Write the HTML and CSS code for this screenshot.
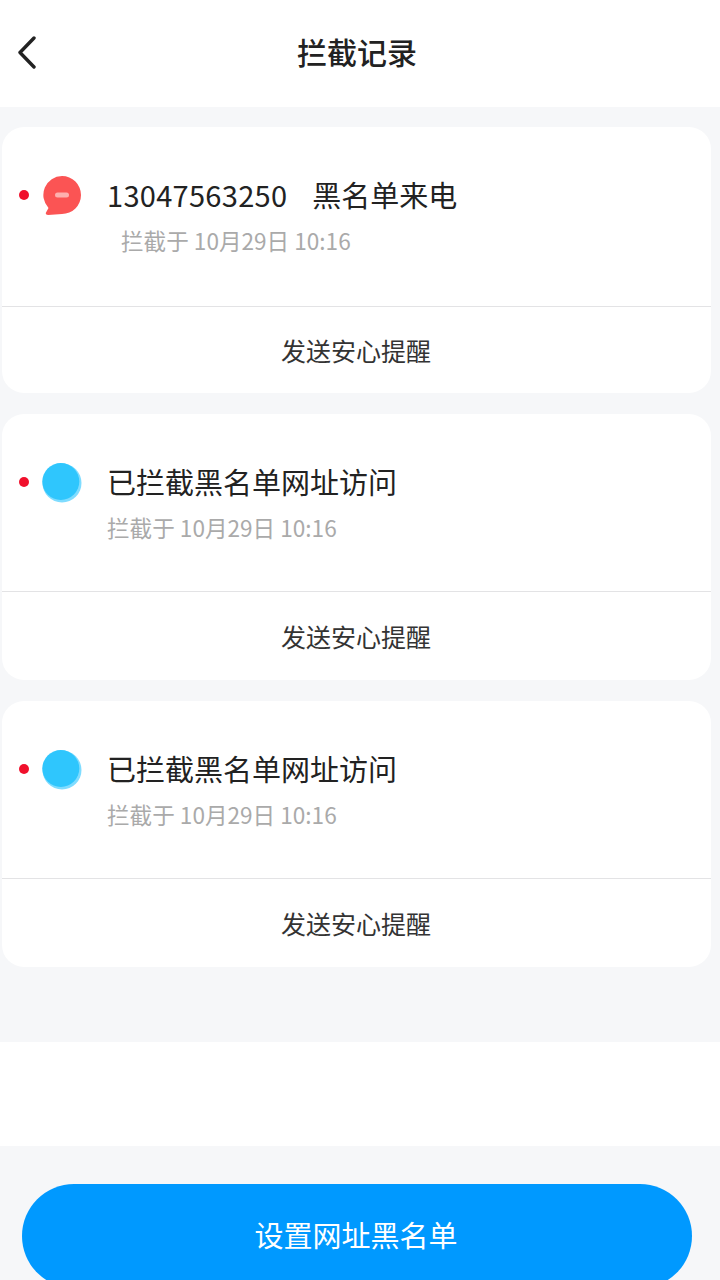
FILE: index.html
```html
<!DOCTYPE html>
<html lang="zh-CN">
<head>
<meta charset="UTF-8">
<title>拦截记录</title>
<link rel="stylesheet" href="styles.css">
</head>
<body>

<div class="page">
    <div class="header">
        <svg class="back-icon" width="22" height="34" viewBox="0 0 22 34">
            <path d="M18 2 L4 16.500 L18 31" fill="none" stroke="#222" stroke-width="3.400" stroke-linecap="round" stroke-linejoin="round"/>
        </svg>
        <div class="title">拦截记录</div>
    </div>

    <div class="list">
        <div class="card">
            <div class="record record-call">
                <span class="dot"></span>
                <svg class="record-icon" width="40" height="42" viewBox="0 0 40 42">
                    <path d="M20 1 A19 19 0 1 1 20 39 L6 40 Q3 40 4 37.500 L6.500 33 A19 19 0 0 1 20 1 Z" fill="#fb5454"/>
                    <rect x="13" y="17.500" width="14" height="5" rx="2.500" fill="#fdb0ae"/>
                </svg>
                <div class="record-text">
                    <div class="record-title"><span class="number">13047563250</span>黑名单来电</div>
                    <div class="record-time indent">拦截于 10月29日 10:16</div>
                </div>
            </div>
            <div class="action">发送安心提醒</div>
        </div>

        <div class="card">
            <div class="record">
                <span class="dot"></span>
                <svg class="record-icon" width="40" height="42" viewBox="0 0 40 42">
                    <circle cx="20" cy="21" r="19.500" fill="#7fdcff"/>
                    <circle cx="18.800" cy="19.500" r="18.500" fill="#2fc6fd"/>
                </svg>
                <div class="record-text">
                    <div class="record-title">已拦截黑名单网址访问</div>
                    <div class="record-time">拦截于 10月29日 10:16</div>
                </div>
            </div>
            <div class="action">发送安心提醒</div>
        </div>

        <div class="card">
            <div class="record">
                <span class="dot"></span>
                <svg class="record-icon" width="40" height="42" viewBox="0 0 40 42">
                    <circle cx="20" cy="21" r="19.500" fill="#7fdcff"/>
                    <circle cx="18.800" cy="19.500" r="18.500" fill="#2fc6fd"/>
                </svg>
                <div class="record-text">
                    <div class="record-title">已拦截黑名单网址访问</div>
                    <div class="record-time">拦截于 10月29日 10:16</div>
                </div>
            </div>
            <div class="action">发送安心提醒</div>
        </div>
    </div>

    <div class="blank"></div>

    <div class="footer">
        <button class="main-button">设置网址黑名单</button>
    </div>
</div>

</body>
</html>
```

FILE: styles.css
```css
html, body {
    margin: 0;
    padding: 0;
}

body {
    font-family: "Noto Sans CJK SC", "Noto Sans", sans-serif;
    background-color: #f6f7f9;
    color: #222;
}

.page {
    width: 720px;
    height: 1280px;
    overflow: hidden;
}

.header {
    height: 107px;
    background: #fff;
    display: flex;
    align-items: center;
    position: relative;
}

.back-icon {
    margin: 0 0 2px 16px;
}

.title {
    position: absolute;
    left: 297px;
    top: 29px;
    font-size: 30px;
    line-height: 44px;
    font-weight: 500;
}

.list {
    height: 935px;
    padding: 20px 9px 0 2px;
    box-sizing: border-box;
    display: flex;
    flex-direction: column;
    gap: 21px;
}

.card {
    height: 266px;
    background: #fff;
    border-radius: 22px;
    display: flex;
    flex-direction: column;
}

.record {
    height: 177px;
    border-bottom: 1px solid #e3e3e5;
    display: flex;
    align-items: flex-start;
}

.record-call {
    height: 179px;
}

.dot {
    width: 10px;
    height: 10px;
    border-radius: 50%;
    background: #f0102c;
    margin: 63px 0 0 17px;
}

.record-icon {
    margin: 48px 0 0 13px;
}

.record-text {
    margin: 45px 0 0 25px;
}

.record-title {
    font-size: 29px;
    line-height: 44px;
}

.number {
    letter-spacing: 0.3px;
    margin-right: 25px;
}

.record-time {
    font-size: 22.6px;
    line-height: 34px;
    color: #aaa;
    margin-top: 8px;
}

.indent {
    margin-left: 14px;
}

.action {
    flex: 1;
    display: flex;
    align-items: center;
    justify-content: center;
    font-size: 25px;
    color: #333;
    padding-left: 2px;
    padding-right: 3px;
}

.blank {
    height: 104px;
    background: #fff;
}

.footer {
    padding: 38px 28px 0 22px;
}

.main-button {
    display: block;
    width: 100%;
    height: 104px;
    border: none;
    border-radius: 52px;
    background-color: #0099ff;
    color: #fff;
    font-family: inherit;
    font-size: 29px;
    padding: 0 2px 4px 0;
}
```
